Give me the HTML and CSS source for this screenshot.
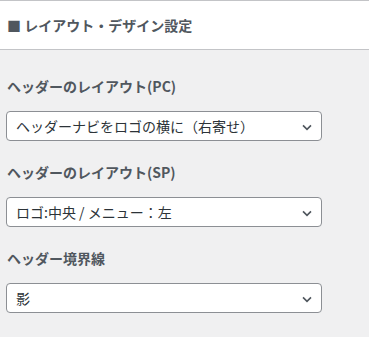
FILE: index.html
```html
<!DOCTYPE html>
<html lang="ja">
<head>
<meta charset="utf-8">
<link rel="stylesheet" href="styles.css">
</head>
<body>
<div class="panel-head">
  <h3 class="panel-title">■ レイアウト・デザイン設定</h3>
</div>
<div class="controls">
  <div class="control">
    <label class="control-label">ヘッダーのレイアウト(PC)</label>
    <select class="control-select"><option>ヘッダーナビをロゴの横に（右寄せ）</option></select>
  </div>
  <div class="control">
    <label class="control-label">ヘッダーのレイアウト(SP)</label>
    <select class="control-select"><option>ロゴ:中央 / メニュー：左</option></select>
  </div>
  <div class="control">
    <label class="control-label">ヘッダー境界線</label>
    <select class="control-select"><option>影</option></select>
  </div>
</div>
</body>
</html>
```
FILE: styles.css
```css
html, body {
  margin: 0;
  padding: 0;
}
body {
  background: #f0f0f1;
  font-family: "Noto Sans CJK JP", "Noto Sans", sans-serif;
  width: 369px;
  height: 337px;
  overflow: hidden;
}
.panel-head {
  background: #fff;
  border-top: 1px solid #c3c4c7;
  border-bottom: 1px solid #c3c4c7;
  height: 48px;
  display: flex;
  align-items: center;
  padding-left: 7px;
}
.panel-title {
  margin: 0;
  font-size: 14px;
  font-weight: 700;
  color: #50575e;
  line-height: 20px;
}
.controls {
  display: flex;
  flex-direction: column;
  padding: 26px 0 0 6px;
  gap: 21px;
}
.control {
  display: flex;
  flex-direction: column;
  gap: 15px;
}
.control-label {
  font-size: 14px;
  font-weight: 700;
  color: #50575e;
  line-height: 20px;
  padding-left: 1px;
}
.control-select {
  appearance: none;
  -webkit-appearance: none;
  width: 316px;
  height: 30px;
  box-sizing: border-box;
  border: 1px solid #8c8f94;
  border-radius: 4px;
  background: #fff url("data:image/svg+xml;utf8,<svg xmlns='http://www.w3.org/2000/svg' width='20' height='20' viewBox='0 0 20 20'><path d='M5 8l5 5 5-5' fill='none' stroke='%2350575e' stroke-width='2'/></svg>") no-repeat right 6px top 55%;
  background-size: 16px 16px;
  font-family: "Noto Sans CJK JP", "Noto Sans", sans-serif;
  font-size: 14px;
  color: #2c3338;
  padding: 0 24px 0 9px;
  line-height: 28px;
  margin: 0;
}
```
